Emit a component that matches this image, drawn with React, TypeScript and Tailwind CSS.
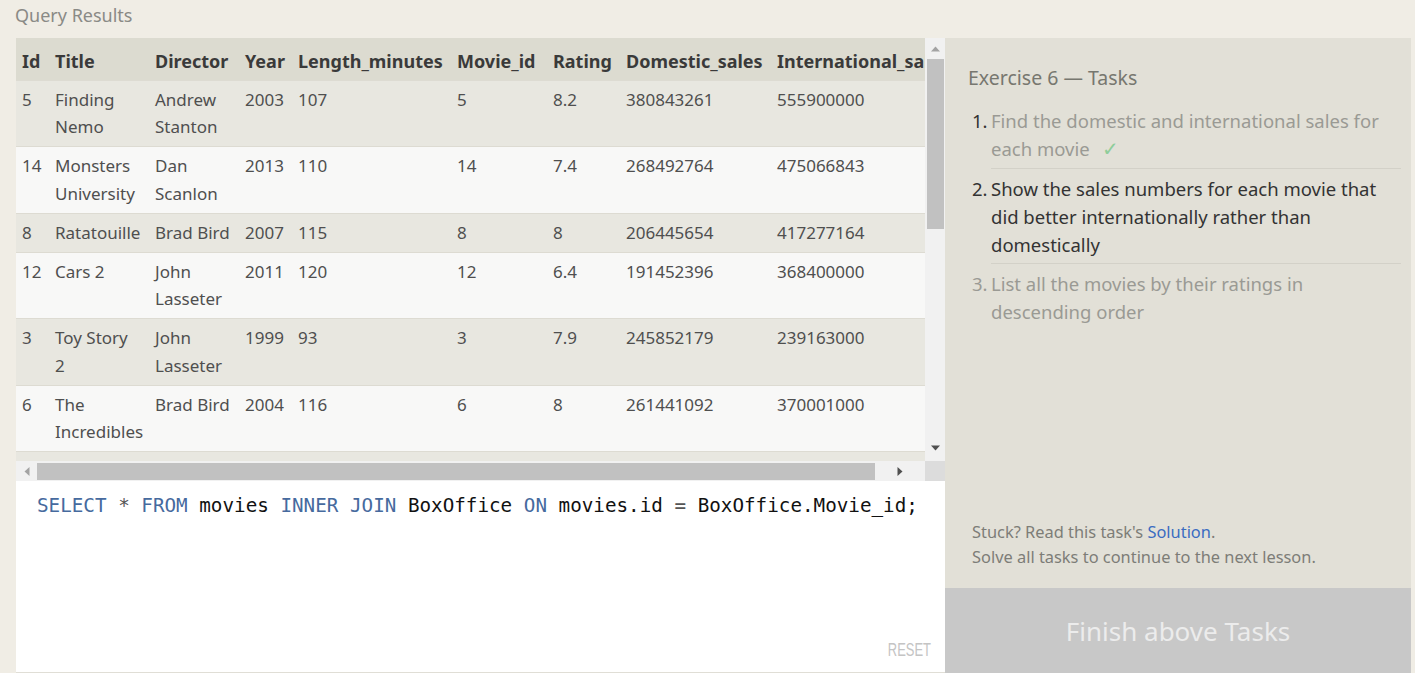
import React from "react";

const rows: { c: (string | string[])[] }[] = [
  { c: ["5", ["Finding", "Nemo"], ["Andrew", "Stanton"], "2003", "107", "5", "8.2", "380843261", "555900000"] },
  { c: ["14", ["Monsters", "University"], ["Dan", "Scanlon"], "2013", "110", "14", "7.4", "268492764", "475066843"] },
  { c: ["8", "Ratatouille", "Brad Bird", "2007", "115", "8", "8", "206445654", "417277164"] },
  { c: ["12", "Cars 2", ["John", "Lasseter"], "2011", "120", "12", "6.4", "191452396", "368400000"] },
  { c: ["3", ["Toy Story", "2"], ["John", "Lasseter"], "1999", "93", "3", "7.9", "245852179", "239163000"] },
  { c: ["6", ["The", "Incredibles"], "Brad Bird", "2004", "116", "6", "8", "261441092", "370001000"] },
  { c: ["9", "WALL-E", ["Andrew", "Stanton"], "2008", "104", "9", "8.5", "223808164", "297503696"] },
];

const headers = ["Id", "Title", "Director", "Year", "Length_minutes", "Movie_id", "Rating", "Domestic_sales", "International_sales"];
const widths = [33, 100, 90, 53, 159, 96, 73, 151, 190];

function Cell({ v }: { v: string | string[] }) {
  if (Array.isArray(v)) {
    return (
      <>
        {v.map((l, i) => (
          <div key={i}>{l}</div>
        ))}
      </>
    );
  }
  return <div>{v}</div>;
}

export default function App() {
  const sans = { fontFamily: '"Noto Sans", "Open Sans", sans-serif' };
  return (
    <div className="w-[1415px] h-[673px] bg-[#f0ede5] overflow-hidden" style={sans}>
      <div className="h-[38px] pl-[15px] pt-[2px] text-[18px] leading-[26px] text-[#8a8a86]">Query Results</div>
      <div className="flex h-[635px]">
        <div className="ml-[16px] w-[929px] flex flex-col">
          {/* table + vertical scrollbar */}
          <div className="flex h-[423px]">
            <div className="w-[909px] h-[423px] overflow-hidden bg-[#e8e7e0]">
              <table className="table-fixed border-collapse" style={{ width: 945 }}>
                <colgroup>
                  {widths.map((w, i) => (
                    <col key={i} style={{ width: w }} />
                  ))}
                </colgroup>
                <thead>
                  <tr className="bg-[#dcdbd0] h-[42px]">
                    {headers.map((h) => (
                      <th key={h} className="px-[6px] pt-[4px] text-left font-bold text-[18px] leading-[24px] text-[#3a3a3a] whitespace-nowrap align-middle">
                        {h}
                      </th>
                    ))}
                  </tr>
                </thead>
                <tbody>
                  {rows.map((r, i) => (
                    <tr key={i} className={(i % 2 === 0 ? "bg-[#e8e7e0]" : "bg-[#f8f8f7]") + " border-t border-[#dddbd2]"}>
                      {r.c.map((v, j) => (
                        <td key={j} className="px-[6px] pt-[5px] pb-[5.5px] align-top text-[17px] leading-[27.5px] text-[#4f4f4f] whitespace-nowrap">
                          <Cell v={v} />
                        </td>
                      ))}
                    </tr>
                  ))}
                </tbody>
              </table>
            </div>
            <div className="w-[20px] h-[423px] bg-[#f1f1f1] flex flex-col items-center">
              <div className="h-[21px] flex items-center justify-center">
                <svg width="9" height="6" viewBox="0 0 9 6"><path d="M0 5.5 L4.5 0.5 L9 5.5Z" fill="#a3a3a3" /></svg>
              </div>
              <div className="w-[17px] h-[170px] bg-[#c1c1c1] ml-[1px]" />
              <div className="flex-1" />
              <div className="h-[24px] pb-[3px] flex items-center justify-center">
                <svg width="9" height="6" viewBox="0 0 9 6"><path d="M0 0.5 L4.5 5.5 L9 0.5Z" fill="#505050" /></svg>
              </div>
            </div>
          </div>
          {/* horizontal scrollbar */}
          <div className="flex h-[20px]">
            <div className="w-[909px] h-[20px] bg-[#f1f1f1] flex items-center">
              <div className="w-[21px] flex items-center justify-center">
                <svg width="6" height="9" viewBox="0 0 6 9"><path d="M5.5 0 L0.5 4.5 L5.5 9Z" fill="#a3a3a3" /></svg>
              </div>
              <div className="w-[838px] h-[17px] bg-[#c1c1c1]" />
              <div className="flex-1 flex items-center justify-center">
                <svg width="6" height="9" viewBox="0 0 6 9"><path d="M0.5 0 L5.5 4.5 L0.5 9Z" fill="#505050" /></svg>
              </div>
            </div>
            <div className="w-[20px] h-[20px] bg-[#dcdcdc]" />
          </div>
          {/* editor */}
          <div className="relative flex-1 bg-white border-b border-[#e0ded6]">
            <div
              className="pl-[21px] pt-[13px] text-[19.25px] leading-[24px] text-[#111] whitespace-nowrap"
              style={{ fontFamily: '"DejaVu Sans Mono", "Liberation Mono", monospace' }}
            >
              <span className="text-[#466a9e]">SELECT</span> <span className="text-[#555]">*</span>{" "}
              <span className="text-[#466a9e]">FROM</span> movies <span className="text-[#466a9e]">INNER</span>{" "}
              <span className="text-[#466a9e]">JOIN</span> BoxOffice <span className="text-[#466a9e]">ON</span> movies.id{" "}
              <span className="text-[#555]">=</span> BoxOffice.Movie_id;
            </div>
            <div
              className="absolute right-[14px] bottom-[12px] text-[18px] leading-[20px] text-[#c4c4c4] origin-right"
              style={{ fontFamily: '"Liberation Sans", sans-serif', transform: "scaleX(0.72)" }}
            >
              RESET
            </div>
          </div>
        </div>
        {/* right panel */}
        <div className="w-[466px] h-[635px] flex flex-col">
          <div className="flex-1 bg-[#e2e0d7] pl-[23px] pr-[10px] flex flex-col">
            <div className="pt-[26px] text-[19.5px] leading-[28px] text-[#77776f]">Exercise 6 — Tasks</div>
            <ol className="mt-[15px] text-[18.5px] leading-[28px]">
              <li className="flex">
                <span className="w-[19px] ml-[4px] text-[#333]">1.</span>
                <div className="flex-1 pb-[5px] pt-0 border-b border-[#d3d1c8] text-[#9a9a94]">
                  Find the domestic and international sales for each movie{" "}
                  <span className="ml-[8px] text-[20px] text-[#8fcd9a]">✓</span>
                </div>
              </li>
              <li className="flex pt-[6px]">
                <span className="w-[19px] ml-[4px] text-[#333]">2.</span>
                <div className="flex-1 pb-[4px] border-b border-[#d3d1c8] text-[#333]">
                  Show the sales numbers for each movie that did better internationally rather than domestically
                </div>
              </li>
              <li className="flex pt-[6px]">
                <span className="w-[19px] ml-[4px] text-[#9a9a94]">3.</span>
                <div className="flex-1 text-[#9a9a94]">List all the movies by their ratings in descending order</div>
              </li>
            </ol>
            <div className="flex-1" />
            <div className="pl-[4px] pb-[19px] text-[16.4px] leading-[25px] text-[#7d7d77]">
              <div>
                Stuck? Read this task's <span className="text-[#3a6cc1]">Solution</span>.
              </div>
              <div>Solve all tasks to continue to the next lesson.</div>
            </div>
          </div>
          <div className="h-[85px] pt-[2px] bg-[#c8c8c8] flex items-center justify-center text-[26px] text-[#ececec]">
            Finish above Tasks
          </div>
        </div>
      </div>
    </div>
  );
}
